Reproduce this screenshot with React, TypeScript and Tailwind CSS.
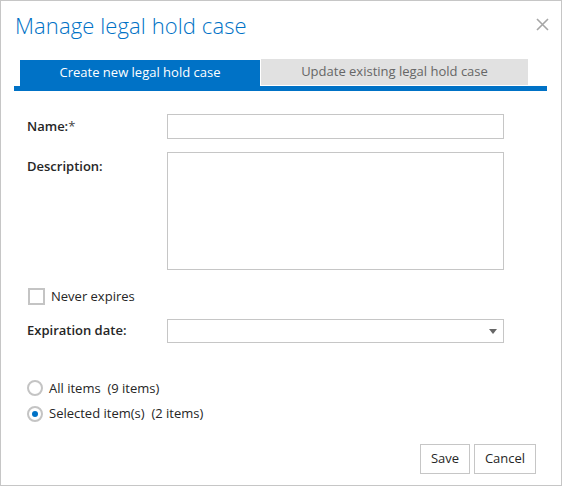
import React, { useState } from 'react';

const font = { fontFamily: '"Segoe UI", "Open Sans", "Noto Sans", sans-serif' };

export default function App() {
  const [scope, setScope] = useState<'all' | 'selected'>('selected');
  const [never, setNever] = useState(false);

  return (
    <div className="w-[562px] h-[486px] bg-white border border-[#c6c6c6] flex flex-col text-[#262626]" style={font}>
      {/* header */}
      <div className="flex items-start justify-between pl-[14px] pr-[12px] pt-[9px] h-[58px]">
        <h1 className="text-[22px] font-light leading-[30px] text-[#0072c6] tracking-[0.1px]">Manage legal hold case</h1>
        <button className="mt-[8px] text-[#a6a6a6]">
          <svg width="13" height="13" viewBox="0 0 13 13" stroke="currentColor" strokeWidth="1.6" fill="none">
            <path d="M1 1l11 11M12 1L1 12" />
          </svg>
        </button>
      </div>

      {/* tabs */}
      <div className="ml-[13px] w-[533px]">
        <div className="flex pl-[6px] h-[27px] items-end">
          <div className="w-[240px] h-[26px] bg-[#0072c6] text-white text-[13px] flex items-center justify-center">
            Create new legal hold case
          </div>
          <div className="ml-[1px] w-[267px] h-[27px] pb-[1px] flex flex-col">
            <div className="flex-1 bg-[#e1e1e1] text-[#666] text-[13px] flex items-center justify-center">
              Update existing legal hold case
            </div>
          </div>
        </div>
        <div className="h-[5px] bg-[#0072c6]" />
      </div>

      {/* form */}
      <div className="pl-[26px] text-[13px]">
        <div className="mt-[23px] flex items-center">
          <label className="w-[140px] font-semibold">Name:<span className="text-[#444] font-normal">*</span></label>
          <input className="w-[337px] h-[25px] border border-[#c6c6c6] outline-none px-[4px]" />
        </div>

        <div className="mt-[13px] flex items-start">
          <label className="w-[140px] font-semibold pt-[5px]">Description:</label>
          <textarea className="w-[337px] h-[118px] border border-[#c6c6c6] outline-none resize-none p-[4px]" />
        </div>

        <label className="mt-[17px] ml-[1px] flex items-center gap-[6px] cursor-pointer w-fit" onClick={() => setNever(!never)}>
          <span className="w-[17px] h-[17px] border-2 border-[#c4c4c4] bg-white flex items-center justify-center">
            {never && <span className="w-[7px] h-[7px] bg-[#0072c6]" />}
          </span>
          <span className="text-[13px]">Never expires</span>
        </label>

        <div className="mt-[12px] flex items-center">
          <label className="w-[140px] font-semibold">Expiration date:</label>
          <div className="relative w-[337px] h-[24px] border border-[#c6c6c6]">
            <svg className="absolute right-[6px] top-[9px]" width="8" height="5" viewBox="0 0 8 5">
              <path d="M0 0h8L4 5z" fill="#666" />
            </svg>
          </div>
        </div>

        <div className="mt-[36px] flex flex-col gap-[6px]">
          {([
            ['all', 'All items', '(9 items)'],
            ['selected', 'Selected item(s)', '(2 items)'],
          ] as const).map(([key, text, count]) => (
            <label key={key} className="flex items-center gap-[6px] cursor-pointer w-fit" onClick={() => setScope(key)}>
              <span className="w-[16px] h-[16px] rounded-full border-2 border-[#c4c4c4] bg-white flex items-center justify-center">
                {scope === key && <span className="w-[6px] h-[6px] rounded-full bg-[#0072c6]" />}
              </span>
              <span>
                {text}&nbsp; {count}
              </span>
            </label>
          ))}
        </div>
      </div>

      <div className="mt-auto mb-[11px] mr-[25px] flex justify-end gap-[4px] text-[13px]">
        <button className="w-[50px] h-[30px] border border-[#c6c6c6] bg-white">Save</button>
        <button className="w-[62px] h-[30px] border border-[#c6c6c6] bg-white">Cancel</button>
      </div>
    </div>
  );
}
